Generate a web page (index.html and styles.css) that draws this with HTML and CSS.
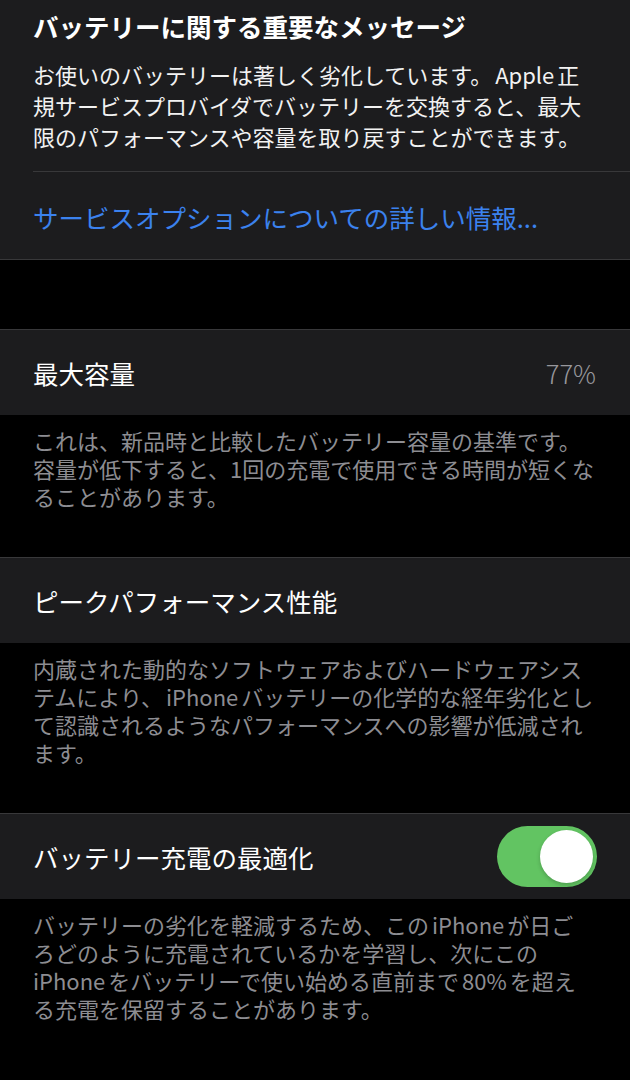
FILE: index.html
```html
<!DOCTYPE html>
<html lang="ja">
<head>
<meta charset="utf-8">
<link rel="stylesheet" href="styles.css">
</head>
<body>
<div class="screen">
  <section class="card notice">
    <div class="notice-inner">
      <h1 class="notice-title">バッテリーに関する重要なメッセージ</h1>
      <p class="notice-body">お使いのバッテリーは著しく劣化しています。<span class="lat">Apple</span>正<br>規サービスプロバイダでバッテリーを交換すると、最大<br>限のパフォーマンスや容量を取り戻すことができます。</p>
      <div class="notice-link-row">
        <span class="notice-link">サービスオプションについての詳しい情報...</span>
      </div>
    </div>
  </section>

  <section class="group">
    <div class="card row">
      <span class="row-label">最大容量</span>
      <span class="row-value">77%</span>
    </div>
    <p class="footer">これは、新品時と比較したバッテリー容量の基準です。<br>容量が低下すると、1回の充電で使用できる時間が短くな<br>ることがあります。</p>
  </section>

  <section class="group">
    <div class="card row">
      <span class="row-label">ピークパフォーマンス性能</span>
    </div>
    <p class="footer">内蔵された動的なソフトウェアおよびハードウェアシス<br>テムにより、<span class="lat">iPhone</span>バッテリーの化学的な経年劣化とし<br>て認識されるようなパフォーマンスへの影響が低減され<br>ます。</p>
  </section>

  <section class="group">
    <div class="card row">
      <span class="row-label">バッテリー充電の最適化</span>
      <span class="toggle"><span class="knob"></span></span>
    </div>
    <p class="footer">バッテリーの劣化を軽減するため、この<span class="lat">iPhone</span>が日ご<br>ろどのように充電されているかを学習し、次にこの<br><span class="lat first">iPhone</span>をバッテリーで使い始める直前まで<span class="lat">80%</span>を超え<br>る充電を保留することがあります。</p>
  </section>
</div>
</body>
</html>
```

FILE: styles.css
```css
* { box-sizing: border-box; }
html, body {
  margin: 0;
  padding: 0;
  background: #000;
}
body {
  font-family: "Noto Sans CJK JP", "Noto Sans", sans-serif;
  color: #fff;
  width: 630px;
  height: 1080px;
  overflow: hidden;
}
.screen {
  display: flex;
  flex-direction: column;
}
.card {
  background: #1c1c1e;
}
.lat {
  margin: 0 3px;
}
.lat.first {
  margin-left: 0;
}
.notice {
  height: 260px;
  border-bottom: 1px solid #38383a;
}
.notice-inner {
  margin-left: 33px;
  padding-top: 8px;
}
.notice-title {
  margin: 0;
  font-size: 25.5px;
  line-height: 36px;
  font-weight: 700;
  color: #fff;
}
.notice-body {
  margin: 15px 0 0 0;
  font-size: 22px;
  line-height: 31px;
  color: #f2f2f2;
  white-space: nowrap;
  padding-bottom: 19px;
  border-bottom: 1px solid #38383a;
}
.notice-link-row {
  height: 86px;
  display: flex;
  align-items: center;
  padding-top: 2px;
}
.notice-link {
  font-size: 25.5px;
  color: #3b82ee;
}
.group {
  margin-top: 69px;
}
.row {
  height: 86px;
  border-top: 1px solid #38383a;
  display: flex;
  align-items: center;
  justify-content: space-between;
  padding: 0 33px;
}
.row-label {
  font-size: 25.5px;
  color: #fff;
}
.row-value {
  font-size: 25.5px;
  font-weight: 300;
  color: #97979c;
  margin-right: 1px;
}
.toggle {
  width: 100px;
  height: 61px;
  border-radius: 31px;
  background: #62c462;
  display: flex;
  align-items: center;
  justify-content: flex-end;
  padding-right: 4px;
}
.knob {
  width: 53px;
  height: 53px;
  border-radius: 50%;
  background: #fff;
  box-shadow: 0 2px 4px rgba(0,0,0,0.2);
}
.footer {
  margin: 0;
  padding: 11px 0 0 33px;
  font-size: 22px;
  line-height: 28px;
  color: #8d8d92;
  white-space: nowrap;
}
.group + .group { margin-top: 47px; }
```
